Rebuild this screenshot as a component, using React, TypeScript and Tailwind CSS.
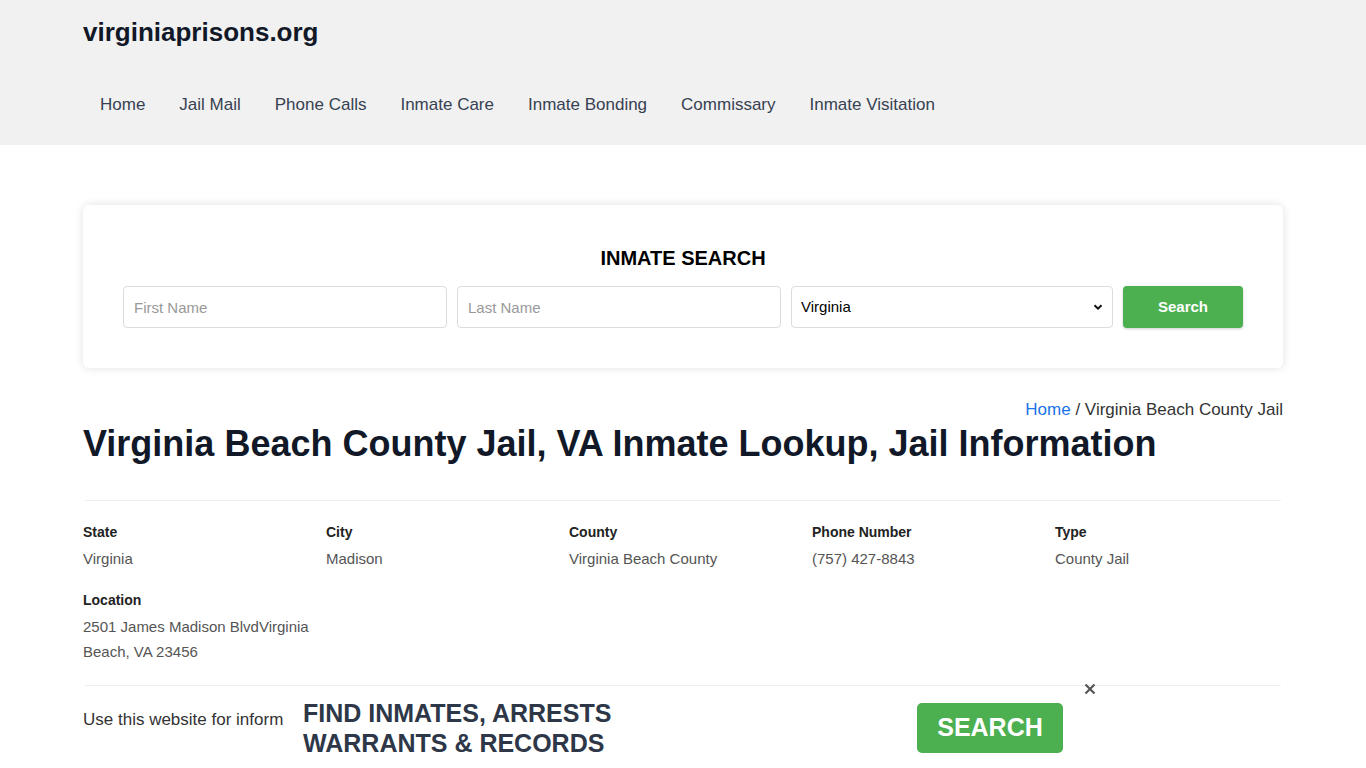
const navItems = ['Home', 'Jail Mail', 'Phone Calls', 'Inmate Care', 'Inmate Bonding', 'Commissary', 'Inmate Visitation'];

const details = [
  { label: 'State', value: 'Virginia' },
  { label: 'City', value: 'Madison' },
  { label: 'County', value: 'Virginia Beach County' },
  { label: 'Phone Number', value: '(757) 427-8843' },
  { label: 'Type', value: 'County Jail' },
  { label: 'Location', value: '2501 James Madison BlvdVirginia Beach, VA 23456' },
];

export default function App() {
  return (
    <div className="min-h-screen bg-white font-['Liberation_Sans',Arial,sans-serif] text-[#333]">
      {/* Header */}
      <header className="bg-[#f1f1f1] h-[145px]">
        <div className="w-[1200px] mx-auto">
          <div className="pt-[16px] h-[70px]">
            <a className="text-[26px] font-bold text-[#111827] leading-[32px]">virginiaprisons.org</a>
          </div>
          <nav className="flex h-[70px] items-center">
            {navItems.map((item) => (
              <a key={item} className="px-[17px] text-[17px] text-[#374151] leading-[20px]">
                {item}
              </a>
            ))}
          </nav>
        </div>
      </header>

      <main className="w-[1200px] mx-auto">
        {/* Search card */}
        <div className="mt-[60px] bg-white rounded-[6px] shadow-[0_0_10px_rgba(0,0,0,0.12)] px-[40px] pt-[39px] pb-[40px]">
          <h2 className="text-center text-[20px] font-bold text-black leading-[28px] mb-[14px]">INMATE SEARCH</h2>
          <div className="flex gap-[10px]">
            <input
              placeholder="First Name"
              className="flex-1 h-[42px] border border-[#dcdcdc] rounded-[4px] px-[10px] text-[15px] placeholder:text-[#999] outline-none"
            />
            <input
              placeholder="Last Name"
              className="flex-1 h-[42px] border border-[#dcdcdc] rounded-[4px] px-[10px] text-[15px] placeholder:text-[#999] outline-none"
            />
            <div className="flex-1 h-[42px] border border-[#dcdcdc] rounded-[4px] px-[9px] flex items-center justify-between text-[15px] text-black">
              <span>Virginia</span>
              <svg width="10" height="10" viewBox="0 0 10 10">
                <path d="M1.5 3.2 L5 6.7 L8.5 3.2" fill="none" stroke="#111" strokeWidth="2" />
              </svg>
            </div>
            <button className="w-[120px] h-[42px] rounded-[4px] bg-[#4caf50] text-white text-[15px] font-bold shadow-[0_1px_3px_rgba(0,0,0,0.2)]">
              Search
            </button>
          </div>
        </div>

        {/* Breadcrumb */}
        <div className="mt-[32px] text-right text-[17px] leading-[20px] text-[#333]">
          <a className="text-[#1a73e8]">Home</a> / Virginia Beach County Jail
        </div>

        <h1 className="mt-[3px] text-[36px] font-bold text-[#111827] leading-[42px]">
          Virginia Beach County Jail, VA Inmate Lookup, Jail Information
        </h1>

        <hr className="mt-[35px] border-t border-[#eeeeee] mx-[2px]" />

        <div className="grid grid-cols-5 gap-x-[15px] gap-y-[19px] pt-[21px] pb-[21px]">
          {details.map((d) => (
            <div key={d.label}>
              <div className="text-[14px] font-bold text-[#222] leading-[20px] mb-[4px]">{d.label}</div>
              <div className="text-[15px] text-[#555] leading-[25px]">{d.value}</div>
            </div>
          ))}
        </div>

        <hr className="border-t border-[#eeeeee] mx-[2px]" />

        <p className="mt-[22px] text-[17px] leading-[24px] text-[#333]">Use this website for inform</p>
      </main>

      {/* Bottom ad banner */}
      <div className="fixed bottom-0 left-[290px] w-[820px] h-[73px] bg-white">
        <button className="absolute -top-[12px] right-[14px] text-[#555]">
          <svg width="12" height="12" viewBox="0 0 12 12">
            <path d="M1.5 1.5 L10.5 10.5 M10.5 1.5 L1.5 10.5" stroke="#555" strokeWidth="2.2" />
          </svg>
        </button>
        <div className="flex items-start pl-[13px]">
          <div className="pt-[3px] text-[25px] font-bold text-[#2d3748] leading-[30px]">
            <div>FIND INMATES, ARRESTS</div>
            <div>WARRANTS &amp; RECORDS</div>
          </div>
          <button className="ml-auto mr-[47px] mt-[8px] w-[146px] h-[50px] rounded-[5px] bg-[#4caf50] text-white text-[25px] font-bold">
            SEARCH
          </button>
        </div>
      </div>
    </div>
  );
}
